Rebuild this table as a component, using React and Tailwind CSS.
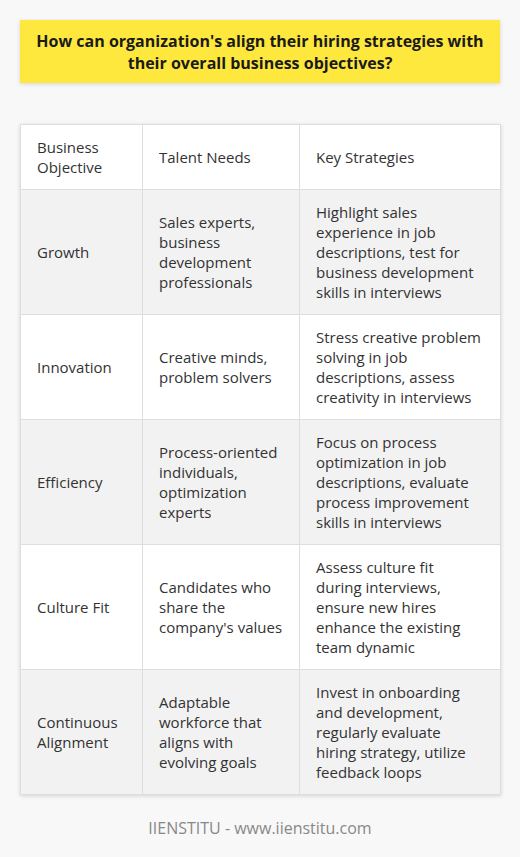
import React from "react";

const rows = [
  ["Growth", "Sales experts, business development professionals", "Highlight sales experience in job descriptions, test for business development skills in interviews"],
  ["Innovation", "Creative minds, problem solvers", "Stress creative problem solving in job descriptions, assess creativity in interviews"],
  ["Efficiency", "Process-oriented individuals, optimization experts", "Focus on process optimization in job descriptions, evaluate process improvement skills in interviews"],
  ["Culture Fit", "Candidates who share the company's values", "Assess culture fit during interviews, ensure new hires enhance the existing team dynamic"],
  ["Continuous Alignment", "Adaptable workforce that aligns with evolving goals", "Invest in onboarding and development, regularly evaluate hiring strategy, utilize feedback loops"],
];

const cell = ["px-4", "px-4", "pl-4 pr-[18px]"];

export default function App() {
  return (
    <div className="w-[520px] h-[857px] bg-[#f8f8f8] px-5 pt-5 text-[#333]" style={{ fontFamily: '"Open Sans", sans-serif' }}>
      {/* Titel */}
      <div className="bg-[#ffe83d] h-[63px] flex items-center justify-center text-center shadow-[0_1px_4px_rgba(0,0,0,0.15)]">
        <h1 className="text-[16px] leading-[22px] font-bold text-[#1a1a1a] px-4">
          How can organization's align their hiring strategies with their overall business objectives?
        </h1>
      </div>

      {/* Tabel */}
      <table className="mt-[41px] w-[480px] table-fixed border-collapse bg-white text-[15px] leading-[20px] shadow-[0_1px_4px_rgba(0,0,0,0.15)]">
        <colgroup>
          <col className="w-[122px]" />
          <col className="w-[157px]" />
          <col className="w-[201px]" />
        </colgroup>
        <thead>
          <tr className="bg-white">
            {["Business Objective", "Talent Needs", "Key Strategies"].map((h, j) => (
              <th key={j} className={`border border-[#dedede] ${cell[j]} py-3 text-left font-normal align-middle`}>{h}</th>
            ))}
          </tr>
        </thead>
        <tbody>
          {rows.map((r, i) => (
            <tr key={i} className={i % 2 === 0 ? "bg-[#f2f2f2]" : "bg-white"}>
              {r.map((c, j) => (
                <td key={j} className={`border border-[#dedede] ${cell[j]} py-3 align-middle`}>{c}</td>
              ))}
            </tr>
          ))}
        </tbody>
      </table>

      <p className="mt-[21px] text-center text-[16px] text-[#888]">IIENSTITU - www.iienstitu.com</p>
    </div>
  );
}
